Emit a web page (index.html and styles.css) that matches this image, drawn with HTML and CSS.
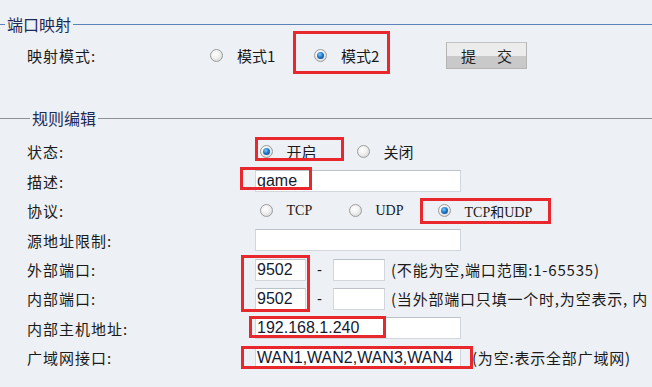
FILE: index.html
```html
<!DOCTYPE html>
<html>
<head>
<meta charset="utf-8">
<link rel="stylesheet" href="styles.css">
</head>
<body>
<div class="page">

	<!-- port mapping mode -->
	<div class="legend legend-blue"><span>端口映射</span></div>
	<div class="mode-row">
		<div class="label">映射模式:</div>
		<label class="opt opt-m1"><span class="radio"></span>模式1</label>
		<label class="opt opt-m2"><span class="radio on"></span>模式2</label>
		<div class="btn"><span>提</span><span>交</span></div>
	</div>

	<!-- rule editor -->
	<div class="legend legend-grey"><span>规则编辑</span></div>
	<div class="rules">
		<div class="label">状态:</div>
		<div class="field radios">
			<label class="opt opt-on"><span class="radio on"></span>开启</label>
			<label class="opt"><span class="radio"></span>关闭</label>
		</div>

		<div class="label">描述:</div>
		<div class="field"><div class="input wide">game</div></div>

		<div class="label">协议:</div>
		<div class="field radios proto">
			<label class="opt opt-p"><span class="radio"></span>TCP</label>
			<label class="opt opt-p"><span class="radio"></span>UDP</label>
			<label class="opt"><span class="radio on"></span>TCP和UDP</label>
		</div>

		<div class="label">源地址限制:</div>
		<div class="field"><div class="input wide"></div></div>

		<div class="label">外部端口:</div>
		<div class="field">
			<div class="input small">9502</div><span class="dash">-</span><div class="input small2"></div>
			<span class="note">(不能为空,端口范围:1-65535)</span>
		</div>

		<div class="label">内部端口:</div>
		<div class="field">
			<div class="input small">9502</div><span class="dash">-</span><div class="input small2"></div>
			<span class="note">(当外部端口只填一个时,为空表示, 内</span>
		</div>

		<div class="label">内部主机地址:</div>
		<div class="field"><div class="input wide">192.168.1.240</div></div>

		<div class="label">广域网接口:</div>
		<div class="field">
			<div class="input wide">WAN1,WAN2,WAN3,WAN4</div>
			<span class="note note-wan">(为空:表示全部广域网)</span>
		</div>
	</div>

	<!-- red annotation boxes -->
	<div class="mark mark-mode"></div>
	<div class="mark mark-state"></div>
	<div class="mark mark-desc"></div>
	<div class="mark mark-proto"></div>
	<div class="mark mark-ports"></div>
	<div class="mark mark-host"></div>
	<div class="mark mark-wan"></div>
</div>
</body>
</html>
```
FILE: styles.css
```css
body
{
	margin: 0;
	background-color: #edf0f4;
	font-family: "Noto Sans CJK SC", sans-serif;
	font-size: 15px;
	color: #1a1a1a;
	overflow: hidden;
}
.page
{
	position: relative;
	width: 652px;
	height: 387px;
	box-sizing: border-box;
	padding-top: 14px;
}


/*
	Section headers
*/
.legend
{
	display: flex;
	align-items: center;
	height: 20px;
	font-size: 16px;
	color: #1d2b57;
}
.legend span
{
	line-height: 20px;
	padding: 0 2px;
}
.legend::before,
.legend::after
{
	content: "";
	height: 1px;
}
.legend::after
{
	flex: 1;
}
.legend-blue::before
{
	width: 5px;
}
.legend-blue::before,
.legend-blue::after
{
	background-color: #5d84b8;
}
.legend-grey
{
	margin-top: 39px;
}
.legend-grey::before
{
	width: 30px;
}
.legend-grey::before,
.legend-grey::after
{
	background-color: #8e9298;
}


/*
	Mode row
*/
.label
{
	letter-spacing: 1px;
}
.mode-row
{
	display: flex;
	align-items: center;
	height: 28px;
	margin-top: 7px;
	padding-left: 27px;
}
.mode-row .label
{
	width: 183px;
}
.opt
{
	display: flex;
	align-items: center;
	gap: 14px;
	white-space: nowrap;
}
.opt-m1
{
	width: 104px;
}
.opt-m2
{
	width: 132px;
}
.btn
{
	width: 81px;
	height: 27px;
	box-sizing: border-box;
	border: 1px solid #b4b4b4;
	border-top-color: #c4c4c4;
	background: linear-gradient(#ececec 0, #ececec 50%, #c9c9c9 52%, #c9c9c9 100%);
	display: flex;
	align-items: center;
	justify-content: center;
	gap: 21px;
	font-size: 15px;
	color: #222;
}


/*
	Radio buttons
*/
.radio
{
	width: 13px;
	height: 13px;
	box-sizing: border-box;
	border-radius: 50%;
	border: 1px solid #9c9c9c;
	background: radial-gradient(circle at 40% 35%, #ffffff 0, #f2f2f2 40%, #cdcdcd 100%);
	flex: none;
	display: flex;
	align-items: center;
	justify-content: center;
}
.radio.on::after
{
	content: "";
	width: 7px;
	height: 7px;
	border-radius: 50%;
	background: radial-gradient(circle at 40% 35%, #7ccaff 0, #1a72c2 50%, #0a3a78 100%);
}


/*
	Rule grid
*/
.rules
{
	display: grid;
	grid-template-columns: 255px 1fr;
	grid-auto-rows: 29.4px;
	align-items: center;
	padding-top: 9.3px;
}
.rules .label
{
	padding-left: 27px;
}
.field
{
	display: flex;
	align-items: center;
	white-space: nowrap;
	min-width: 0;
	overflow: hidden;
}
.radios
{
	padding-left: 4.5px;
}
.opt-on
{
	width: 97px;
}
.proto
{
	font-family: "Liberation Serif", "Noto Sans CJK SC", serif;
	font-size: 14px;
}
.opt-p
{
	width: 89px;
}
.input
{
	flex: none;
	height: 22px;
	box-sizing: border-box;
	border: 1px solid #d2d7de;
	border-top-color: #bcc2ca;
	background-color: white;
	padding: 0 1px;
	font-family: "Liberation Sans", sans-serif;
	font-size: 16px;
	line-height: 20px;
	color: #151a30;
}
.wide
{
	width: 206px;
}
.small
{
	width: 51px;
}
.small2
{
	width: 52px;
}
.dash
{
	flex: none;
	width: 27px;
	text-align: center;
	font-family: "Liberation Sans", sans-serif;
}
.note
{
	margin-left: 6px;
	letter-spacing: 0.8px;
}
.note-wan
{
	margin-left: 11px;
}


/*
	Red annotation boxes
*/
.mark
{
	position: absolute;
	border: 3px solid #e8282c;
	box-sizing: border-box;
}
.mark-mode
{
	left: 293px;
	top: 31px;
	width: 97px;
	height: 43px;
}
.mark-state
{
	left: 255px;
	top: 137px;
	width: 89px;
	height: 24px;
}
.mark-desc
{
	left: 240px;
	top: 167px;
	width: 72px;
	height: 23px;
}
.mark-proto
{
	left: 420px;
	top: 198px;
	width: 131px;
	height: 26px;
}
.mark-ports
{
	left: 241px;
	top: 255px;
	width: 69px;
	height: 57px;
}
.mark-host
{
	left: 249px;
	top: 316px;
	width: 137px;
	height: 22px;
}
.mark-wan
{
	left: 241px;
	top: 346px;
	width: 232px;
	height: 23px;
}
```
